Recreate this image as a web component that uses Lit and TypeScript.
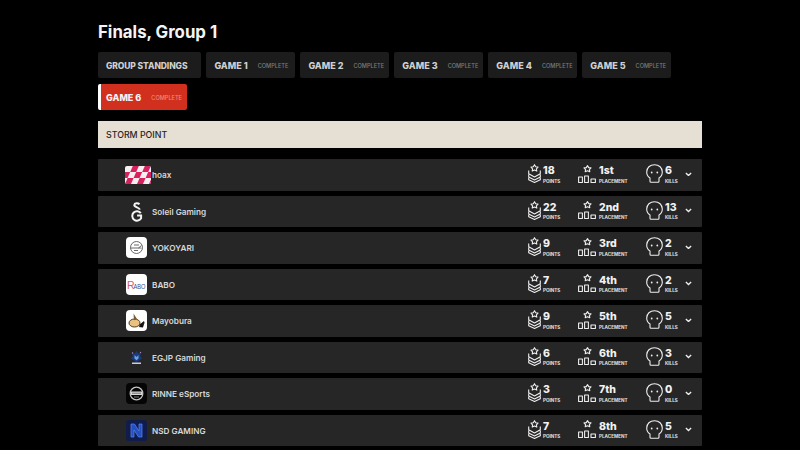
import { LitElement, html, css, svg } from "lit";
import { customElement } from "lit/decorators.js";

const teams = [
  { name: "hoax", logo: "hoax", pts: 18, place: "1st", kills: 6 },
  { name: "Soleil Gaming", logo: "soleil", pts: 22, place: "2nd", kills: 13 },
  { name: "YOKOYARI", logo: "yoko", pts: 9, place: "3rd", kills: 2 },
  { name: "BABO", logo: "babo", pts: 7, place: "4th", kills: 2 },
  { name: "Mayobura", logo: "mayo", pts: 9, place: "5th", kills: 5 },
  { name: "EGJP Gaming", logo: "egjp", pts: 6, place: "6th", kills: 3 },
  { name: "RINNE eSports", logo: "rinne", pts: 3, place: "7th", kills: 0 },
  { name: "NSD GAMING", logo: "nsd", pts: 7, place: "8th", kills: 5 },
];

const hoaxCells = [0, 1, 2].flatMap((r) =>
  [-1, 0, 1, 2, 3, 4]
    .filter((c) => (c + r) % 2 === 0)
    .map((c) => {
      const x = c * 6 + (2 - r) * 2.6;
      const y = r * 6;
      return svg`<path d="M${x + 2.6} ${y}h6l-2.600 6h-6z" fill="#d8215f"/>`;
    })
);

const logos: Record<string, unknown> = {
  hoax: svg`<svg class="lg wide" viewBox="0 0 26 18"><clipPath id="hc"><rect width="26" height="18" rx="2"/></clipPath><g clip-path="url(#hc)"><rect width="26" height="18" fill="#f6eff2"/>${hoaxCells}</g></svg>`,
  soleil: svg`<svg class="lg" viewBox="0 0 21 21"><g fill="none" stroke="#f4f4f4" stroke-width="2"><path d="M13.500 3.200C12 1.800 8.500 1.900 8.300 4c-.2 2.400 5.300 2.200 5.500 4.700"/><path d="M14.800 12.200a4.700 4.700 0 1 0 .3 5V14.500h-4"/></g></svg>`,
  yoko: svg`<svg class="lg" viewBox="0 0 21 21"><rect width="21" height="21" rx="4" fill="#fff"/><circle cx="10.500" cy="10.500" r="6" fill="none" stroke="#444" stroke-width=".8"/><path d="M4.500 11h11M15.500 8.500l-3 2.500M8 8h5M8 13.500h4" stroke="#444" stroke-width=".8" fill="none"/></svg>`,
  babo: svg`<svg class="lg" viewBox="0 0 21 21"><rect width="21" height="21" rx="4" fill="#fff"/><text x="1" y="15" font-family="Liberation Sans" font-size="10.500" fill="#cf5a6e">R</text><text x="7.400" y="14.500" font-family="Liberation Sans" font-size="8" textLength="12" lengthAdjust="spacingAndGlyphs" fill="#3b4a8a">ABO</text></svg>`,
  mayo: svg`<svg class="lg" viewBox="0 0 21 21"><rect width="21" height="21" rx="4" fill="#fff"/><ellipse cx="8.500" cy="13" rx="5.500" ry="4" fill="#e9c27f" stroke="#3a2a18" stroke-width=".9"/><path d="M7.500 3.500l3.500 5.500-3 1.200z" fill="#7a5a35"/><path d="M12.500 17l6-4.500-1.500 5z" fill="#111"/><path d="M13 15l5-4 .5 2-4.500 3.500z" fill="#111"/></svg>`,
  egjp: svg`<svg class="lg" viewBox="0 0 21 21"><path d="M10.500 4l1.700 2.500 2.800-1-.8 3.500 1.800 2.500-2.500 1.500-3 2.500-3-2.500-2.500-1.500 1.800-2.500-.8-3.500 2.800 1z" fill="#1a3a7c"/><path d="M8.500 8l2 2 2-2v3.500l-2 1.800-2-1.800z" fill="#6ea2e0"/><circle cx="6.500" cy="6" r=".7" fill="#a78bc0"/><circle cx="14.500" cy="5.500" r=".7" fill="#a78bc0"/><rect x="6" y="15.500" width="9" height="1.500" fill="#c4cfe2"/></svg>`,
  rinne: svg`<svg class="lg" viewBox="0 0 21 21"><rect width="21" height="21" rx="4" fill="#050505"/><circle cx="10.500" cy="10.500" r="6.300" fill="none" stroke="#c6c6c6" stroke-width="1.300"/><rect x="5" y="8.500" width="11" height="3.500" fill="#d8d8d8"/><path d="M6 10.200h9" stroke="#444" stroke-width=".7"/><path d="M8 14h5" stroke="#999" stroke-width=".8"/></svg>`,
  nsd: svg`<svg class="lg" viewBox="0 0 21 21"><rect width="21" height="21" rx="3" fill="#101c4c"/><path d="M5 4h3.500l4.500 7V4h3v13h-3.500L8 10v7H5z" fill="#2450c4" stroke="#5a86ee" stroke-width=".7" stroke-linejoin="round"/></svg>`,
};

const pointsIcon = svg`<svg class="ic pts" viewBox="0 0 13 19" fill="none" stroke="#eee" stroke-width="1.100" stroke-linejoin="round"><path d="M6.500.7l1.200 2.100 2.300.3-1.600 1.700.4 2.300-2.300-1-2.300 1 .4-2.300L3 3.100l2.300-.3z"/><path d="M.7 6.500v3.200L6.500 13l5.800-3.300V6.500M.7 10.500v2.400L6.500 16l5.800-3.100v-2.400M.7 13.700v2L6.500 18.500l5.800-2.800v-2"/></svg>`;
const placeIcon = svg`<svg class="ic plc" viewBox="0 0 18 18" fill="none" stroke="#eee" stroke-width="1.100" stroke-linejoin="round"><path d="M9.500.6l1.200 2 2.300.3-1.600 1.700.4 2.200-2.300-1-2.300 1 .4-2.200L6 2.900l2.300-.3z"/><rect x=".6" y="12" width="3.800" height="5.500"/><rect x="6.600" y="11" width="3.800" height="6.500"/><rect x="13" y="14" width="4.400" height="3.500"/></svg>`;
const skullIcon = svg`<svg class="ic skl" viewBox="0 0 17 19" fill="none" stroke="#eee" stroke-width="1.100" stroke-linejoin="round"><path d="M8.500.7C4 .7.7 3.800.7 8c0 2.800 1.400 4.800 3.300 5.900v3.400c0 .6.400 1 1 1h7c.6 0 1-.4 1-1v-3.400c1.900-1.100 3.300-3.100 3.300-5.900C16.300 3.800 13 .7 8.500.7z"/><circle cx="5.700" cy="8.500" r=".9" fill="#eee" stroke="none"/><circle cx="11.300" cy="8.500" r=".9" fill="#eee" stroke="none"/></svg>`;
const chevron = svg`<svg class="chev" viewBox="0 0 8 5" fill="none" stroke="#eee" stroke-width="1.500"><path d="M1 1l3 3 3-3"/></svg>`;

@customElement("app-root")
export class AppRoot extends LitElement {
  static styles = css`
    :host {
      display: block;
      width: 800px;
      height: 450px;
      overflow: hidden;
      background: #000;
      color: #eee;
      font-family: Inter, "Liberation Sans", sans-serif;
    }
    .wrap { width: 604px; margin: 0 auto; padding-top: 22px; }
    h1 { margin: 0 0 9px; height: 21px; line-height: 21px; font-size: 16.800px; font-weight: 700; color: #f4f4f4; }
    .tabs { display: flex; flex-wrap: wrap; gap: 6px 5.400px; width: 590px; }
    .tab {
      box-sizing: border-box; height: 26px; padding: 1px 8px 0; display: flex; align-items: center; gap: 10px;
      background: #1c1c1c; border-radius: 2px; font-size: 9px; font-weight: 800; color: #cfcfcf; white-space: nowrap;
    }
    .tab small { font-size: 5.600px; font-weight: 500; color: #7d7d7d; }
    .tab.group { width: 103px; font-size: 8.500px; letter-spacing: -0.1px; }
    .tab.game { width: 88.600px; }
    .tab.on { background: #d2301f; border-left: 3px solid #fff; color: #f4f4f4; padding-left: 5px; }
    .tab.on small { color: #ee8a7e; }
    .map {
      box-sizing: border-box; height: 27px; margin: 11px 0 11px; padding-left: 8px; display: flex; align-items: center;
      background: #e6dfd3; color: #262626; font-size: 8.800px; font-weight: 500;
    }
    .row {
      box-sizing: border-box; height: 31.500px; margin-bottom: 5px; padding-left: 27px;
      display: flex; align-items: center; background: #262626; border-radius: 1px;
    }
    .logo { width: 27px; height: 21px; flex: none; display: flex; align-items: center; }
    .lg { width: 21px; height: 21px; display: block; margin-left: 1px; }
    .lg.wide { width: 26px; height: 18px; margin-left: 0; }
    .name { flex: 1; font-size: 8.200px; font-weight: 600; color: #d8d8d8; padding-top: 1px; }
    .stat { display: flex; align-items: center; flex: none; margin-bottom: 2px; }
    .s-pts { width: 51px; }
    .s-plc { width: 68px; }
    .s-kil { width: 38px; }
    .ic { display: block; flex: none; }
    .pts { width: 13px; height: 19px; margin: 0 2px 0 1px; }
    .plc { width: 18px; height: 18px; margin-right: 3px; }
    .skl { width: 17px; height: 19px; margin-right: 2px; }
    .txt { display: flex; flex-direction: column; padding-top: 2px; }
    .val { font-size: 10.500px; line-height: 12px; font-weight: 800; color: #f2f2f2; margin-bottom: 1.500px; }
    .cap { font-size: 4.600px; line-height: 6px; font-weight: 700; color: #e0e0e0; }
    .chev { width: 7px; height: 4.500px; display: block; flex: none; margin: 0 10px 2px 1px; }
  `;

  private stat(cls: string, icon: unknown, val: unknown, cap: string) {
    return html`<div class="stat ${cls}">${icon}<div class="txt"><span class="val">${val}</span><span class="cap">${cap}</span></div></div>`;
  }

  render() {
    return html`<div class="wrap">
      <h1>Finals, Group 1</h1>
      <div class="tabs">
        <div class="tab group">GROUP STANDINGS</div>
        ${[1, 2, 3, 4, 5, 6].map(
          (n) => html`<div class="tab game ${n === 6 ? "on" : ""}">GAME ${n}<small>COMPLETE</small></div>`
        )}
      </div>
      <div class="map">STORM POINT</div>
      ${teams.map(
        (t) => html`<div class="row">
          <div class="logo">${logos[t.logo]}</div>
          <div class="name">${t.name}</div>
          ${this.stat("s-pts", pointsIcon, t.pts, "POINTS")}
          ${this.stat("s-plc", placeIcon, t.place, "PLACEMENT")}
          ${this.stat("s-kil", skullIcon, t.kills, "KILLS")}
          ${chevron}
        </div>`
      )}
    </div>`;
  }
}
